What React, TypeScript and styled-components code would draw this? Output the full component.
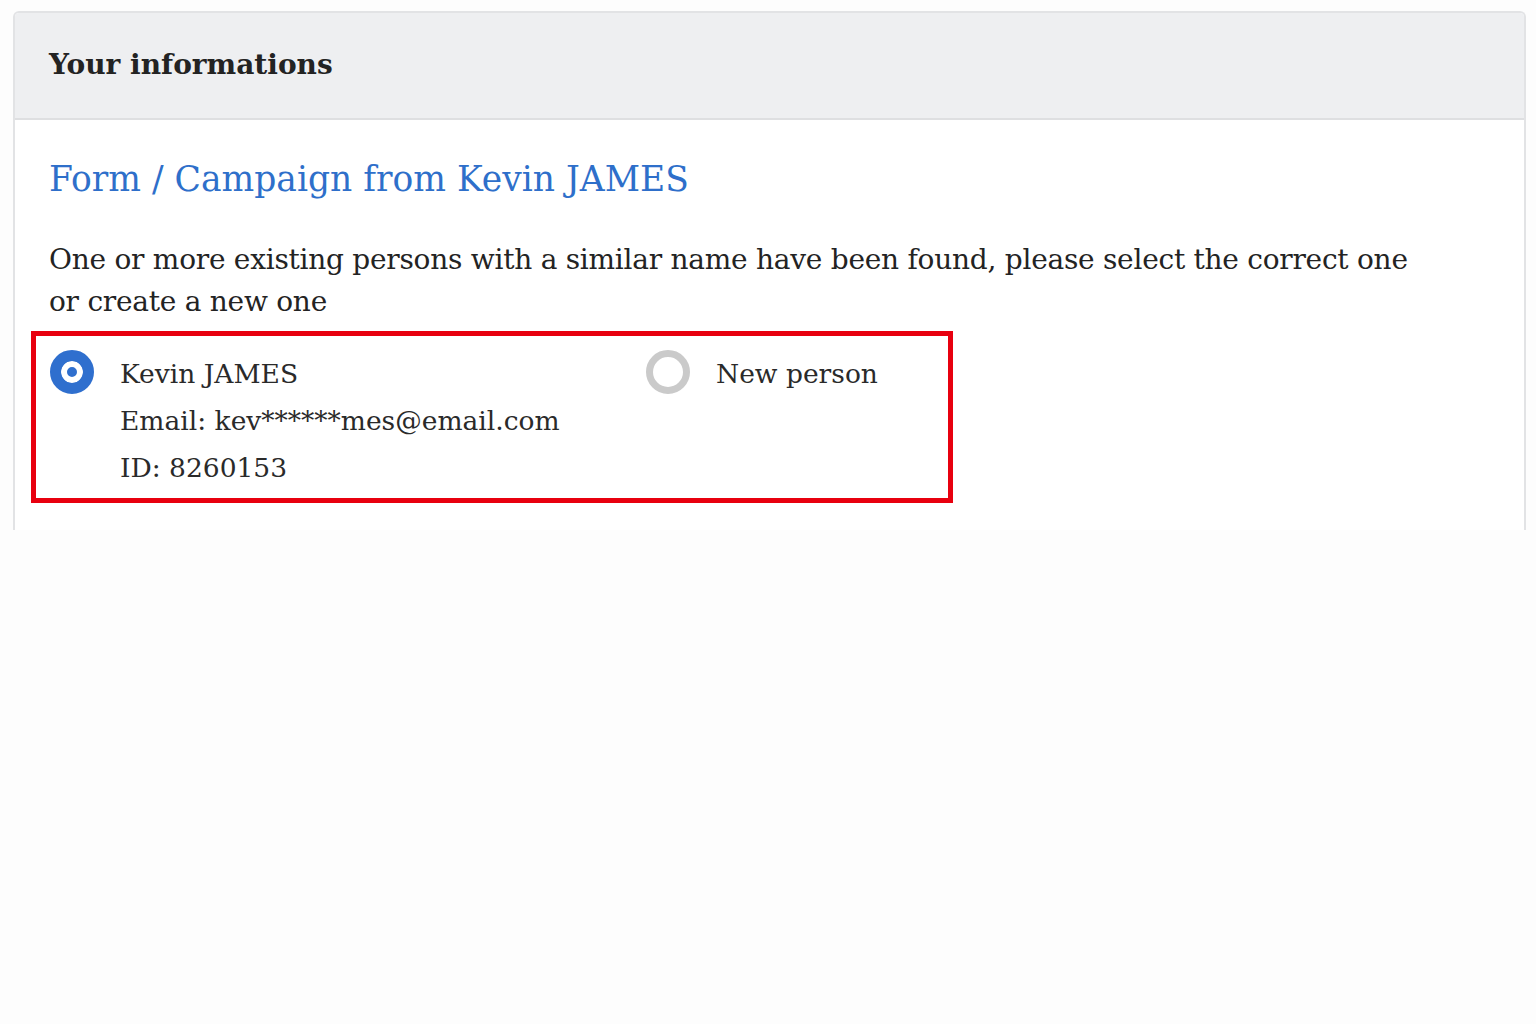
import React from 'react'
import styled, {createGlobalStyle} from 'styled-components'

const GlobalStyle = createGlobalStyle`
  html, body {
    margin: 0;
    padding: 0;
    background-color: #fdfdfd;
  }
  body {
    font-family: "DejaVu Serif", "Liberation Serif", serif;
    color: #222;
  }
`

const Page = styled.div`
  padding: 11px 10px 0 13px;
  min-height: 1024px;
  box-sizing: border-box;
`

const Card = styled.section`
  border: 2px solid #e2e3e5;
  border-bottom: none;
  border-radius: 6px 6px 0 0;
  background-color: #fff;
  height: 519px;
  box-sizing: border-box;
  overflow: hidden;
`

const CardHeader = styled.header`
  background-color: #eeeff1;
  border-bottom: 2px solid #dedfe1;
  height: 107px;
  box-sizing: border-box;
  display: flex;
  align-items: center;
  padding: 0 34px 2px 34px;

  > h2 {
    margin: 0;
    font-size: 28px;
    font-weight: bold;
    color: #232323;
  }
`

const CardBody = styled.div`
  padding: 36px 34px 0 34px;

  > h3 {
    margin: 0;
    font-size: 34.5px;
    font-weight: normal;
    color: #2e6fca;
    line-height: 46px;
  }

  > p {
    margin: 37px 0 0 0;
    font-size: 28px;
    letter-spacing: -0.25px;
    line-height: 42px;
    color: #232323;
    max-width: 1380px;
  }
`

const Choices = styled.div`
  border: 5px solid #e8000f;
  width: 922px;
  height: 172px;
  box-sizing: border-box;
  margin: 8px 0 0 -18px;
  padding: 14px 0 0 14px;
  display: flex;
`

const Choice = styled.label<{width: number}>`
  width: ${p => p.width}px;
  display: flex;
  align-items: flex-start;
  gap: 26px;
  font-size: 26.5px;
  color: #2a2a2a;
  line-height: 47px;
`

const Radio = styled.span<{checked?: boolean}>`
  flex: none;
  width: 44px;
  height: 44px;
  border-radius: 50%;
  box-sizing: border-box;
  border: ${p => p.checked ? '11px solid #2f6fce' : '7px solid #cacaca'};
  background-color: ${p => p.checked ? '#2f6fce' : '#fff'};
  box-shadow: ${p => p.checked ? 'inset 0 0 0 6px #fff' : 'none'};
`

const Details = styled.div`
  display: flex;
  flex-direction: column;
`

export default function App() {
  return (
    <>
      <GlobalStyle/>
      <Page>
        <Card>
          <CardHeader>
            <h2>Your informations</h2>
          </CardHeader>
          <CardBody>
            <h3>Form / Campaign from Kevin JAMES</h3>
            <p>One or more existing persons with a similar name have been found, please select the correct one or create a new one</p>
            <Choices>
              <Choice width={596}>
                <Radio checked/>
                <Details>
                  <span>Kevin JAMES</span>
                  <span>Email: kev******mes@email.com</span>
                  <span>ID: 8260153</span>
                </Details>
              </Choice>
              <Choice width={300}>
                <Radio/>
                <Details>
                  <span>New person</span>
                </Details>
              </Choice>
            </Choices>
          </CardBody>
        </Card>
      </Page>
    </>
  )
}
